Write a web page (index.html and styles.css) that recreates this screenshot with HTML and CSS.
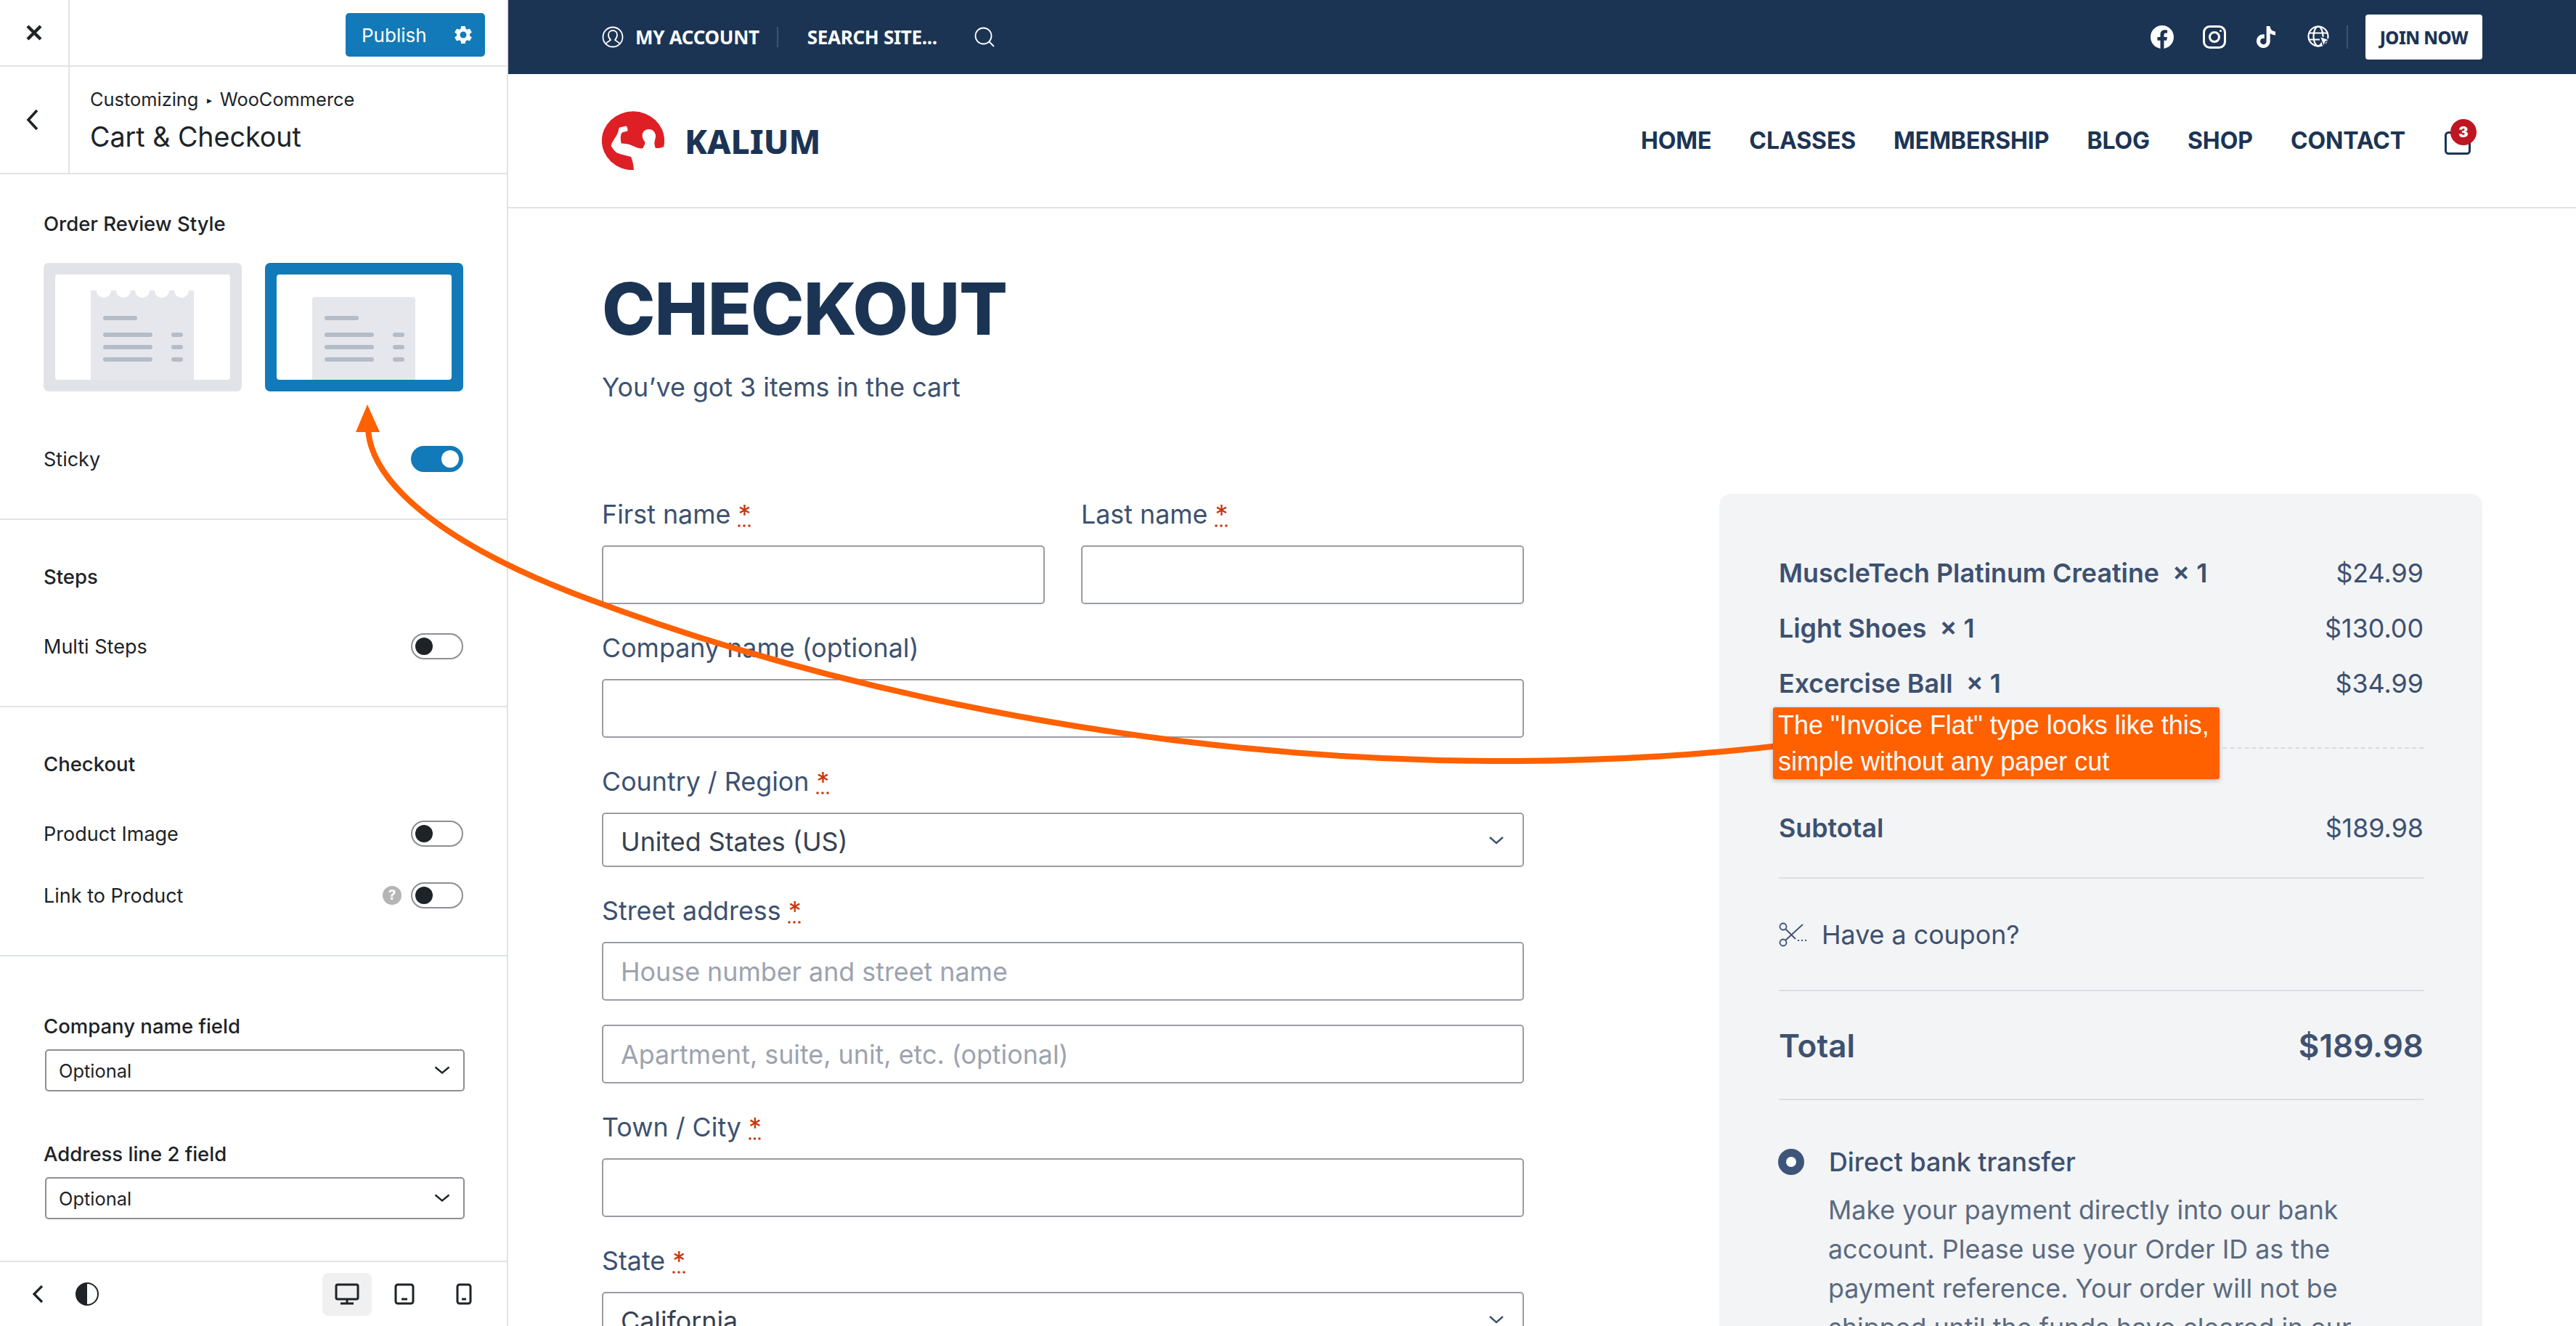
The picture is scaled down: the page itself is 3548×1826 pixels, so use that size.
FILE: index.html
```html
<!DOCTYPE html>
<html lang="en">
<head>
  <meta charset="UTF-8">
  <title>Customizing WooCommerce - Cart &amp; Checkout</title>
  <link rel="stylesheet" href="styles.css">
</head>
<body>
  <aside class="cz">
    <div class="cz-top">
      <div class="cz-close">
        <svg width="24" height="24" viewBox="0 0 24 24"><path d="M3 3l18 18M21 3L3 21" stroke="#1d2327" stroke-width="4.4" fill="none"/></svg>
      </div>
      <div class="cz-publish">
        <span>Publish</span>
        <svg width="30" height="30" viewBox="0 0 24 24"><path fill="#fff" d="M19.14 12.94c.04-.3.06-.61.06-.94 0-.32-.02-.64-.07-.94l2.03-1.58a.49.49 0 0 0 .12-.61l-1.92-3.32a.488.488 0 0 0-.59-.22l-2.39.96c-.5-.38-1.03-.7-1.62-.94l-.36-2.54a.484.484 0 0 0-.48-.41h-3.84c-.24 0-.43.17-.47.41l-.36 2.54c-.59.24-1.13.57-1.62.94l-2.39-.96c-.22-.08-.47 0-.59.22L2.74 8.87c-.12.21-.08.47.12.61l2.03 1.58c-.05.3-.09.63-.09.94s.02.64.07.94l-2.03 1.58a.49.49 0 0 0-.12.61l1.92 3.32c.12.22.37.29.59.22l2.39-.96c.5.38 1.03.7 1.62.94l.36 2.54c.05.24.24.41.48.41h3.84c.24 0 .44-.17.47-.41l.36-2.54c.59-.24 1.13-.56 1.62-.94l2.39.96c.22.08.47 0 .59-.22l1.92-3.32c.12-.22.07-.47-.12-.61l-2.01-1.58zM12 15.6c-1.98 0-3.6-1.62-3.6-3.6s1.62-3.6 3.6-3.6 3.6 1.62 3.6 3.6-1.62 3.6-3.6 3.6z"/></svg>
      </div>
    </div>

    <div class="cz-head">
      <div class="cz-back">
        <svg width="18" height="30" viewBox="0 0 18 30"><path d="M15 2L3 15l12 13" stroke="#1d2327" stroke-width="3.6" fill="none"/></svg>
      </div>
      <div class="cz-title">
        <div class="cz-crumb">Customizing <span class="cz-sep">▸</span> WooCommerce</div>
        <div class="cz-name">Cart &amp; Checkout</div>
      </div>
    </div>

    <div class="cz-body">
      <section class="cz-section cz-first">
        <div class="cz-label">Order Review Style</div>
        <div class="cz-thumbs">
          <svg width="273" height="177" viewBox="0 0 273 177">
            <rect width="273" height="177" rx="7" fill="#e1e3e8"/>
            <rect x="16" y="16" width="241" height="145" rx="4" fill="#fff"/>
            <rect x="65" y="38" width="142" height="123" fill="#e5e7ec"/>
            <g fill="#fff">
              <circle cx="83" cy="38" r="10"/><circle cx="110" cy="38" r="10"/><circle cx="136" cy="38" r="10"/><circle cx="163" cy="38" r="10"/><circle cx="190" cy="38" r="10"/>
            </g>
            <g fill="#b4bcc8">
              <rect x="82" y="73" width="47" height="6" rx="3"/>
              <rect x="82" y="96" width="68" height="6" rx="3"/><rect x="176" y="96" width="16" height="6" rx="3"/>
              <rect x="82" y="113" width="68" height="6" rx="3"/><rect x="176" y="113" width="16" height="6" rx="3"/>
              <rect x="82" y="130" width="68" height="6" rx="3"/><rect x="176" y="130" width="16" height="6" rx="3"/>
            </g>
          </svg>
          <svg width="273" height="177" viewBox="0 0 273 177">
            <rect width="273" height="177" rx="7" fill="#127ab8"/>
            <rect x="16" y="16" width="241" height="145" rx="4" fill="#fff"/>
            <path d="M65 161V51a4 4 0 0 1 4-4h134a4 4 0 0 1 4 4v110z" fill="#e5e7ec"/>
            <g fill="#b4bcc8">
              <rect x="82" y="73" width="47" height="6" rx="3"/>
              <rect x="82" y="96" width="68" height="6" rx="3"/><rect x="176" y="96" width="16" height="6" rx="3"/>
              <rect x="82" y="113" width="68" height="6" rx="3"/><rect x="176" y="113" width="16" height="6" rx="3"/>
              <rect x="82" y="130" width="68" height="6" rx="3"/><rect x="176" y="130" width="16" height="6" rx="3"/>
            </g>
          </svg>
        </div>
        <div class="cz-row cz-row-sticky">
          <span>Sticky</span>
          <span class="toggle toggle-on"><i></i></span>
        </div>
      </section>

      <section class="cz-section">
        <div class="cz-label">Steps</div>
        <div class="cz-row cz-row-first">
          <span>Multi Steps</span>
          <span class="toggle"><i></i></span>
        </div>
      </section>

      <section class="cz-section">
        <div class="cz-label">Checkout</div>
        <div class="cz-row cz-row-first">
          <span>Product Image</span>
          <span class="toggle"><i></i></span>
        </div>
        <div class="cz-row cz-row-next">
          <span>Link to Product</span>
          <span class="cz-right"><b class="help">?</b><span class="toggle"><i></i></span></span>
        </div>
      </section>

      <section class="cz-section cz-last">
        <div class="cz-label">Company name field</div>
        <div class="cz-select">
          <span>Optional</span>
          <svg width="22" height="12" viewBox="0 0 22 12"><path d="M1.5 1.5L11 9.5l9.5-8" stroke="#1d2327" stroke-width="2.4" fill="none"/></svg>
        </div>
        <div class="cz-label cz-label-next">Address line 2 field</div>
        <div class="cz-select">
          <span>Optional</span>
          <svg width="22" height="12" viewBox="0 0 22 12"><path d="M1.5 1.5L11 9.5l9.5-8" stroke="#1d2327" stroke-width="2.4" fill="none"/></svg>
        </div>
      </section>
    </div>

    <div class="cz-foot">
      <div class="cz-foot-left">
        <svg width="16" height="26" viewBox="0 0 16 26"><path d="M14 2L3 13l11 11" stroke="#1d2327" stroke-width="3.2" fill="none"/></svg>
        <svg width="32" height="32" viewBox="0 0 32 32"><circle cx="16" cy="16" r="15" fill="#fff" stroke="#1d2327" stroke-width="2"/><path d="M16 1a15 15 0 0 0 0 30z" fill="#1d2327"/></svg>
      </div>
      <div class="cz-devices">
        <span class="device device-on">
          <svg width="34" height="30" viewBox="0 0 34 30"><rect x="2" y="2" width="30" height="20" rx="2" fill="none" stroke="#1d2327" stroke-width="3"/><path d="M17 22v5M8 28h18" stroke="#1d2327" stroke-width="3"/></svg>
        </span>
        <span class="device device-tablet">
          <svg width="28" height="30" viewBox="0 0 28 30"><rect x="2" y="2" width="24" height="26" rx="3" fill="none" stroke="#1d2327" stroke-width="3"/><path d="M10 22h8" stroke="#1d2327" stroke-width="3"/></svg>
        </span>
        <span class="device device-phone">
          <svg width="22" height="30" viewBox="0 0 22 30"><rect x="2" y="2" width="18" height="26" rx="3" fill="none" stroke="#1d2327" stroke-width="3"/><path d="M8 22h6" stroke="#1d2327" stroke-width="3"/></svg>
        </span>
      </div>
    </div>
  </aside>

  <main class="site">
    <div class="topbar">
      <div class="topbar-left">
        <svg class="top-user" width="30" height="30" viewBox="0 0 30 30" fill="none" stroke="#fff" stroke-width="1.8"><circle cx="15" cy="15" r="13.5"/><path d="M5.5 24.5c1-3 5-3.500 6.500-5.500-2-2-3-4-3-7 0-3.500 2.500-6 6-6s6 2.500 6 6c0 3-1 5-3 7 1.500 2 5.500 2.500 6.500 5.500"/></svg>
        <span class="top-link">MY ACCOUNT</span>
        <span class="top-div"></span>
        <span class="top-link top-search">SEARCH SITE...</span>
        <svg width="28" height="28" viewBox="0 0 28 28" fill="none" stroke="#fff" stroke-width="1.8"><circle cx="12.500" cy="12.500" r="11"/><path d="M20.500 20.500l6.500 6.500"/></svg>
      </div>
      <div class="topbar-right">
        <svg width="32" height="32" viewBox="0 0 24 24"><path fill="#fff" d="M24 12.073c0-6.627-5.373-12-12-12s-12 5.373-12 12c0 5.990 4.388 10.954 10.125 11.854v-8.385H7.078v-3.470h3.047V9.430c0-3.007 1.792-4.669 4.533-4.669 1.312 0 2.686.235 2.686.235v2.953H15.830c-1.491 0-1.956.925-1.956 1.874v2.250h3.328l-.532 3.470h-2.796v8.385C19.612 23.027 24 18.062 24 12.073z"/></svg>
        <svg width="32" height="32" viewBox="0 0 32 32" fill="none" stroke="#fff" stroke-width="3"><rect x="1.500" y="1.500" width="29" height="29" rx="8"/><circle cx="16" cy="16" r="6.500"/><circle cx="24.500" cy="7.500" r="1.500" fill="#fff" stroke="none"/></svg>
        <svg width="30" height="32" viewBox="0 0 24 24"><path fill="#fff" d="M12.525.02c1.310-.02 2.610-.01 3.910-.02.08 1.530.63 3.090 1.750 4.170 1.120 1.110 2.700 1.620 4.240 1.790v4.030c-1.440-.05-2.890-.35-4.200-.97-.57-.26-1.100-.59-1.620-.93-.01 2.920.01 5.840-.02 8.750-.08 1.400-.54 2.790-1.350 3.940-1.310 1.920-3.580 3.170-5.910 3.210-1.430.08-2.860-.31-4.080-1.030-2.020-1.190-3.440-3.370-3.650-5.710-.02-.5-.03-1-.01-1.490.18-1.900 1.120-3.720 2.580-4.960 1.660-1.440 3.980-2.130 6.150-1.720.02 1.480-.04 2.960-.04 4.440-.99-.32-2.150-.23-3.020.37-.63.41-1.110 1.040-1.360 1.750-.21.51-.15 1.070-.14 1.610.24 1.640 1.820 3.020 3.500 2.870 1.120-.01 2.190-.66 2.770-1.610.19-.33.4-.67.41-1.060.1-1.790.06-3.570.07-5.360.01-4.030-.01-8.050.02-12.070z"/></svg>
        <svg class="top-globe" width="32" height="32" viewBox="0 0 32 32" fill="none" stroke="#fff" stroke-width="2.200"><circle cx="15" cy="15" r="13.500"/><ellipse cx="15" cy="15" rx="6.500" ry="13.500"/><path d="M2 10.500h26M2 19.500h15"/><path d="M17 15l14 5-6 2.500-2.500 6.500z" fill="#fff" stroke="#1c3454" stroke-width="1.500"/></svg>
        <span class="top-div top-div-right"></span>
        <span class="join">JOIN NOW</span>
      </div>
    </div>

    <nav class="nav">
      <div class="logo">
        <svg width="86" height="81" viewBox="28 22 258 244">
          <ellipse cx="157" cy="145" rx="130" ry="122" fill="#de1f26"/>
          <path fill="#fff" d="M65 165C75 140 90 125 95 108C97 98 98 92 102 90L128 84C133 88 136 98 134 104C126 108 116 108 110 112C104 122 104 140 108 156C125 156 140 158 155 166C170 172 182 180 198 176C202 165 208 158 206 150C196 140 192 122 198 110C205 98 222 94 236 100C250 108 254 125 248 140C245 150 244 162 250 175C262 178 280 172 300 165V285L160 266C158 245 155 225 148 212C130 205 110 203 90 195C80 188 72 178 65 165Z"/>
        </svg>
        <span class="logo-text">KALIUM</span>
      </div>
      <div class="menu">
        <a>HOME</a><a>CLASSES</a><a>MEMBERSHIP</a><a>BLOG</a><a>SHOP</a><a>CONTACT</a>
        <span class="cart">
          <svg width="36" height="32" viewBox="0 0 36 32"><rect x="1.500" y="1.500" width="33" height="29" rx="4" fill="none" stroke="#1c3454" stroke-width="3"/></svg>
          <b class="badge">3</b>
        </span>
      </div>
    </nav>

    <div class="page">
      <h1>CHECKOUT</h1>
      <p class="sub">You’ve got 3 items in the cart</p>

      <div class="columns">
        <form class="form">
          <div class="two">
            <div class="field">
              <label>First name <abbr title="required">*</abbr></label>
              <input type="text">
            </div>
            <div class="field">
              <label>Last name <abbr title="required">*</abbr></label>
              <input type="text">
            </div>
          </div>
          <div class="field">
            <label>Company name (optional)</label>
            <input type="text">
          </div>
          <div class="field">
            <label>Country / Region <abbr title="required">*</abbr></label>
            <div class="select">
              <span>United States (US)</span>
              <svg width="22" height="12" viewBox="0 0 22 12"><path d="M2 2l9 8 9-8" stroke="#3d5170" stroke-width="2.400" fill="none"/></svg>
            </div>
          </div>
          <div class="field">
            <label>Street address <abbr title="required">*</abbr></label>
            <input type="text" placeholder="House number and street name">
            <input class="input-next" type="text" placeholder="Apartment, suite, unit, etc. (optional)">
          </div>
          <div class="field">
            <label>Town / City <abbr title="required">*</abbr></label>
            <input type="text">
          </div>
          <div class="field">
            <label>State <abbr title="required">*</abbr></label>
            <div class="select">
              <span>California</span>
              <svg width="22" height="12" viewBox="0 0 22 12"><path d="M2 2l9 8 9-8" stroke="#3d5170" stroke-width="2.400" fill="none"/></svg>
            </div>
          </div>
        </form>

        <div class="summary">
          <div class="item"><span class="item-name">MuscleTech Platinum Creatine &nbsp;× 1</span><span>$24.99</span></div>
          <div class="item"><span class="item-name">Light Shoes &nbsp;× 1</span><span>$130.00</span></div>
          <div class="item"><span class="item-name">Excercise Ball &nbsp;× 1</span><span>$34.99</span></div>
          <div class="dashed"></div>
          <div class="item item-sub"><span class="item-name">Subtotal</span><span>$189.98</span></div>
          <div class="coupon">
            <svg width="38" height="36" viewBox="0 0 38 36" fill="none" stroke="#3d5170" stroke-width="1.800"><circle cx="6" cy="7" r="4.500"/><circle cx="6" cy="29" r="4.500"/><path d="M9 10l14 14M9 26L33 4"/><path d="M26 26h2M31 26h2M36 26h2"/></svg>
            <span>Have a coupon?</span>
          </div>
          <div class="item item-total"><span>Total</span><span>$189.98</span></div>
          <div class="pay">
            <span class="radio"></span>
            <span>Direct bank transfer</span>
          </div>
          <p class="pay-text">Make your payment directly into our bank account. Please use your Order ID as the payment reference. Your order will not be shipped until the funds have cleared in our account.</p>
        </div>
      </div>
    </div>
  </main>

  <!-- annotation drawn on top of the screenshot -->
  <svg class="arrow" width="3548" height="1826" viewBox="0 0 3548 1826">
    <path d="M507 590C510 660 600 745 800 821C1100 935 1560 1050 2090 1048C2220 1047 2340 1040 2450 1027" fill="none" stroke="#ff6000" stroke-width="8"/>
    <path d="M506 557L490 595H523z" fill="#ff6000"/>
  </svg>
  <div class="note">The "Invoice Flat" type looks like this,<br>simple without any paper cut</div>
</body>
</html>
```

FILE: styles.css
```css
* {
  box-sizing: border-box;
}
html, body {
  height: 100%;
}
body {
  margin: 0;
  display: flex;
  overflow: hidden;
  background-color: #fff;
  font-family: Inter, "Liberation Sans", sans-serif;
}

/* customizer sidebar */
.cz {
  width: 700px;
  height: 1826px;
  flex: none;
  display: flex;
  flex-direction: column;
  border-right: 2px solid #e1e3e6;
  color: #1d2327;
}
.cz-top {
  height: 92px;
  flex: none;
  display: flex;
  justify-content: space-between;
  align-items: flex-start;
  border-bottom: 2px solid #e1e3e6;
}
.cz-close {
  width: 96px;
  height: 90px;
  display: flex;
  align-items: center;
  justify-content: center;
  border-right: 2px solid #e1e3e6;
}
.cz-publish {
  width: 192px;
  height: 60px;
  margin: 18px 30px 0 0;
  padding: 0 15px 0 22px;
  display: flex;
  justify-content: space-between;
  align-items: center;
  border-radius: 5px;
  background-color: #127ab8;
  color: #fff;
  font-size: 26px;
}
.cz-head {
  height: 148px;
  flex: none;
  display: flex;
  border-bottom: 2px solid #e1e3e6;
}
.cz-back {
  width: 96px;
  display: flex;
  align-items: center;
  justify-content: center;
  border-right: 2px solid #e1e3e6;
  padding-right: 4px;
}
.cz-title {
  padding: 28px 0 0 28px;
}
.cz-crumb {
  font-size: 25.4px;
  line-height: 34px;
}
.cz-sep {
  font-size: 14px;
  vertical-align: 3px;
  margin: 0 4px;
}
.cz-name {
  margin-top: 9px;
  font-size: 37.6px;
  line-height: 50px;
}
.cz-body {
  flex: 1;
  overflow: hidden;
}
.cz-section {
  padding: 62px 60px 64px;
  border-bottom: 2px solid #e1e3e6;
}
.cz-first {
  padding-top: 52px;
  padding-bottom: 64px;
}
.cz-last {
  padding-top: 80px;
  padding-bottom: 0;
  border-bottom: none;
}
.cz-label {
  font-size: 27.5px;
  line-height: 32px;
  font-weight: 500;
}
.cz-label-next {
  margin-top: 70px;
}
.cz-thumbs {
  margin-top: 38px;
  display: flex;
  justify-content: space-between;
}
.cz-row {
  height: 36px;
  display: flex;
  justify-content: space-between;
  align-items: center;
  font-size: 27px;
}
.cz-row-sticky {
  margin-top: 75px;
}
.cz-row-first {
  margin-top: 62px;
}
.cz-row-next {
  margin-top: 49px;
}
.cz-right {
  display: flex;
  align-items: center;
  gap: 13px;
}
.help {
  width: 26px;
  height: 26px;
  border-radius: 50%;
  background-color: #b5b5b5;
  color: #fff;
  font-size: 19px;
  line-height: 26px;
  text-align: center;
}
.toggle {
  width: 72px;
  height: 36px;
  padding: 4px;
  display: flex;
  border: 2px solid #8c8f94;
  border-radius: 18px;
  background-color: #fff;
}
.toggle i {
  width: 24px;
  height: 24px;
  border-radius: 50%;
  background-color: #1d2327;
}
.toggle-on {
  justify-content: flex-end;
  border-color: #127ab8;
  background-color: #127ab8;
}
.toggle-on i {
  background-color: #fff;
}
.cz-select {
  width: 578px;
  height: 58px;
  margin: 16px 0 0 2px;
  padding: 0 18px 0 17px;
  display: flex;
  justify-content: space-between;
  align-items: center;
  border: 2px solid #8c8f94;
  border-radius: 5px;
  font-size: 25.4px;
}
.cz-foot {
  height: 90px;
  flex: none;
  display: flex;
  justify-content: space-between;
  align-items: center;
  border-top: 2px solid #e1e3e6;
  padding: 0 48px 0 44px;
}
.cz-foot-left {
  display: flex;
  align-items: center;
  gap: 44px;
}
.cz-devices {
  display: flex;
  align-items: center;
}
.device {
  height: 59px;
  display: flex;
  align-items: center;
  justify-content: center;
  border-radius: 8px;
}
.device-on {
  width: 68px;
  background-color: #f0f0f1;
}
.device-tablet {
  margin-left: 31px;
}
.device-phone {
  margin-left: 57px;
}

/* site preview */
.site {
  flex: 1;
  min-width: 0;
  height: 1826px;
  overflow: hidden;
}
.topbar {
  height: 102px;
  padding: 0 129px;
  display: flex;
  justify-content: space-between;
  align-items: center;
  background-color: #1c3454;
  color: #fff;
}
.topbar-left, .topbar-right {
  display: flex;
  align-items: center;
}
.top-user {
  margin-right: 16px;
}
.top-link {
  font-family: "Noto Sans", sans-serif;
  font-size: 26px;
  font-weight: 700;
  letter-spacing: -0.3px;
}
.top-div {
  width: 2px;
  height: 28px;
  margin: 0 40px 0 24px;
  background-color: #3d5473;
}
.top-search {
  margin-right: 51px;
}
.topbar-right svg {
  margin-right: 40px;
}
.topbar-right .top-globe {
  margin-left: 2px;
  margin-right: 38px;
}
.topbar-right .top-div-right {
  height: 32px;
  margin: 0 24px 0 -16px;
}
.join {
  width: 161px;
  height: 62px;
  display: flex;
  align-items: center;
  justify-content: center;
  border-radius: 4px;
  background-color: #fff;
  color: #1c3454;
  font-family: "Noto Sans", sans-serif;
  font-size: 24px;
  font-weight: 800;
  letter-spacing: -0.5px;
}
.nav {
  height: 185px;
  padding: 0 129px;
  display: flex;
  justify-content: space-between;
  align-items: center;
  border-bottom: 2px solid #e1e3e6;
}
.logo {
  display: flex;
  align-items: center;
  gap: 28px;
}
.logo-text {
  color: #1c3454;
  font-family: "Noto Sans", sans-serif;
  font-size: 46px;
  font-weight: 800;
}
.menu {
  display: flex;
  align-items: center;
  gap: 52px;
  color: #1c3454;
  font-family: Inter, sans-serif;
  font-size: 32px;
  font-weight: 700;
  letter-spacing: -0.1px;
}
.cart {
  position: relative;
  margin: 6px 16px 0 2px;
  display: flex;
}
.badge {
  position: absolute;
  top: -17px;
  left: 8px;
  width: 36px;
  height: 36px;
  border-radius: 50%;
  background-color: #bd1622;
  color: #fff;
  font-size: 20px;
  line-height: 36px;
  letter-spacing: 0;
  text-align: center;
}
.page {
  padding: 0 129px;
}
h1 {
  margin: 88px 0 0;
  color: #1c3454;
  font-family: Inter, sans-serif;
  font-size: 99px;
  line-height: 100px;
  font-weight: 800;
  letter-spacing: -1px;
}
.sub {
  margin: 36px 0 0;
  color: #3d5170;
  font-size: 35.8px;
  line-height: 44px;
}
.columns {
  margin-top: 125px;
  display: flex;
  justify-content: space-between;
  align-items: flex-start;
}

/* checkout form */
.form {
  width: 1270px;
  padding-top: 6px;
}
.two {
  display: flex;
  gap: 50px;
}
.two .field {
  flex: 1;
}
.field {
  margin-bottom: 38px;
}
.field label {
  display: block;
  margin-bottom: 21px;
  color: #3d5170;
  font-size: 35.8px;
  line-height: 44px;
}
abbr {
  color: #c8350f;
}
input, .select {
  width: 100%;
  height: 81px;
  padding: 0 24px;
  display: block;
  border: 2px solid #9a9ca3;
  border-radius: 5px;
  background-color: #fff;
  font-family: Inter, sans-serif;
  font-size: 35.8px;
}
input::placeholder {
  color: #9ca3af;
}
.input-next {
  margin-top: 33px;
}
.select {
  height: 75px;
  display: flex;
  justify-content: space-between;
  align-items: center;
  color: #374151;
  padding: 4px 25px 0 24px;
}
.select svg {
  margin-top: -4px;
}

/* order summary */
.summary {
  width: 1051px;
  min-height: 1300px;
  padding: 87px 81px 0 82px;
  border-radius: 16px;
  background-color: #f3f4f6;
  color: #3d5170;
  font-size: 35.8px;
}
.item {
  height: 44px;
  margin-bottom: 32px;
  display: flex;
  justify-content: space-between;
  align-items: center;
}
.item-name {
  font-weight: 600;
}
.dashed {
  margin-top: 66px;
  border-top: 2px dashed #d8dade;
}
.item-sub {
  margin: 87px 0 46px;
}
.coupon {
  height: 157px;
  display: flex;
  align-items: center;
  gap: 21px;
  border-top: 2px solid #dcdee2;
  border-bottom: 2px solid #dcdee2;
}
.item-total {
  height: 150px;
  margin: 0;
  padding-top: 2px;
  border-bottom: 2px solid #dcdee2;
  font-size: 44px;
  font-weight: 600;
}
.pay {
  margin-top: 63px;
  height: 44px;
  display: flex;
  align-items: center;
  gap: 34px;
  font-weight: 500;
}
.radio {
  width: 36px;
  height: 36px;
  margin-left: -1px;
  flex: none;
  border: 11px solid #3d5578;
  border-radius: 50%;
  background-color: #fff;
}
.pay-text {
  margin: 17px 0 0 68px;
  color: #5a6a80;
  line-height: 54px;
}

/* orange annotation */
.arrow {
  position: absolute;
  top: 0;
  left: 0;
  pointer-events: none;
}
.note {
  position: absolute;
  top: 974px;
  left: 2442px;
  width: 615px;
  height: 99px;
  padding-left: 7px;
  border-radius: 3px;
  background-color: #ff6000;
  box-shadow: 0 2px 6px rgba(0, 0, 0, 0.25);
  color: #fff;
  font-family: "Liberation Sans", Arial, sans-serif;
  font-size: 36px;
  line-height: 50px;
  white-space: nowrap;
}
```
